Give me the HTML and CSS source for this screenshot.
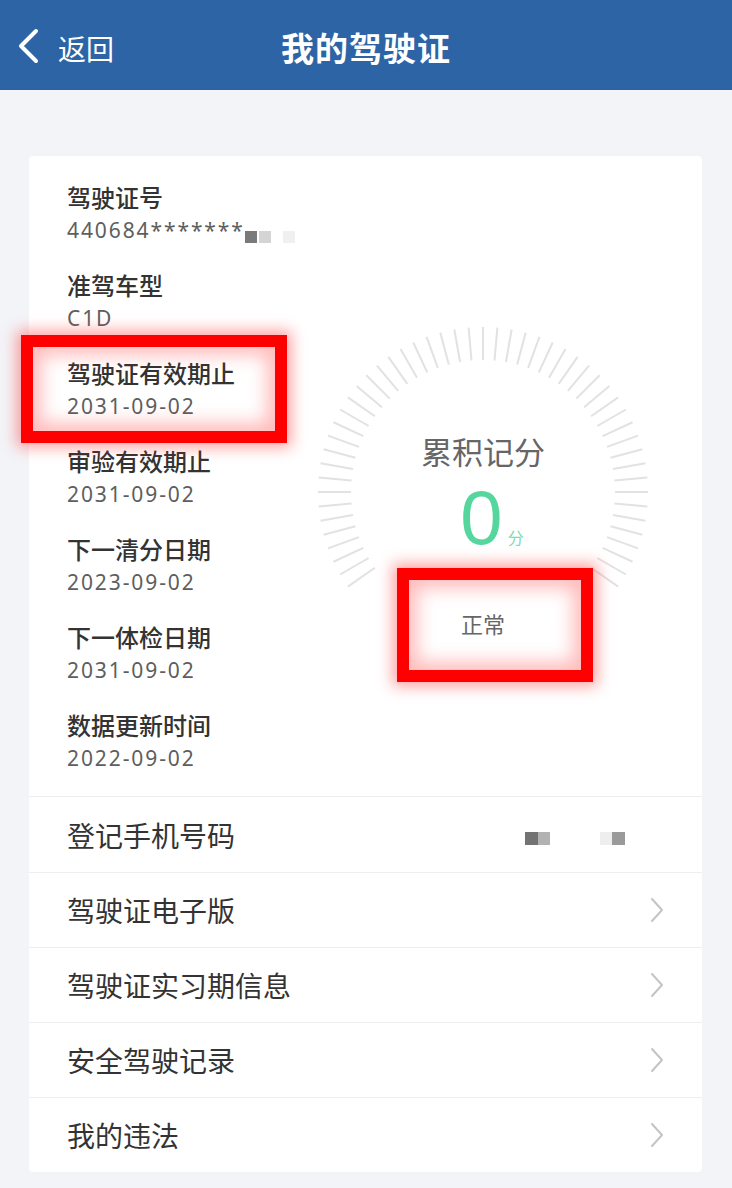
FILE: index.html
```html
<!DOCTYPE html>
<html lang="zh-CN">
<head>
<meta charset="utf-8">
<title>我的驾驶证</title>
<link rel="stylesheet" href="styles.css">
</head>
<body>
<header class="nav">
  <div class="back">
    <svg class="back-icon" viewBox="0 0 22 36" width="22" height="36"><path d="M19 3 L4 18 L19 33" fill="none" stroke="#fff" stroke-width="4" stroke-linecap="round" stroke-linejoin="round"/></svg>
    <span>返回</span>
  </div>
  <h1 class="title">我的驾驶证</h1>
  <div></div>
</header>
<main class="page">
  <section class="card">
    <div class="info">
      <dl class="fields">
        <div class="field"><dt>驾驶证号</dt><dd>440684*******<span class="mosaic"><i class="m1"></i><i class="m2"></i><i class="m3"></i></span></dd></div>
        <div class="field"><dt>准驾车型</dt><dd>C1D</dd></div>
        <div class="field"><dt>驾驶证有效期止</dt><dd>2031-09-02</dd></div>
        <div class="field"><dt>审验有效期止</dt><dd>2031-09-02</dd></div>
        <div class="field"><dt>下一清分日期</dt><dd>2023-09-02</dd></div>
        <div class="field"><dt>下一体检日期</dt><dd>2031-09-02</dd></div>
        <div class="field"><dt>数据更新时间</dt><dd>2022-09-02</dd></div>
      </dl>
      <div class="gauge">
        <svg class="ticks" viewBox="0 0 336 336" width="336" height="336">
          <defs><line id="t" x1="168" y1="3" x2="168" y2="36" stroke="#e2e2e2" stroke-width="2"/></defs>
          <use href="#t" transform="rotate(-125 168 168)"/><use href="#t" transform="rotate(-120 168 168)"/><use href="#t" transform="rotate(-115 168 168)"/><use href="#t" transform="rotate(-110 168 168)"/><use href="#t" transform="rotate(-105 168 168)"/><use href="#t" transform="rotate(-100 168 168)"/><use href="#t" transform="rotate(-95 168 168)"/><use href="#t" transform="rotate(-90 168 168)"/><use href="#t" transform="rotate(-85 168 168)"/><use href="#t" transform="rotate(-80 168 168)"/><use href="#t" transform="rotate(-75 168 168)"/><use href="#t" transform="rotate(-70 168 168)"/><use href="#t" transform="rotate(-65 168 168)"/><use href="#t" transform="rotate(-60 168 168)"/><use href="#t" transform="rotate(-55 168 168)"/><use href="#t" transform="rotate(-50 168 168)"/><use href="#t" transform="rotate(-45 168 168)"/><use href="#t" transform="rotate(-40 168 168)"/><use href="#t" transform="rotate(-35 168 168)"/><use href="#t" transform="rotate(-30 168 168)"/><use href="#t" transform="rotate(-25 168 168)"/><use href="#t" transform="rotate(-20 168 168)"/><use href="#t" transform="rotate(-15 168 168)"/><use href="#t" transform="rotate(-10 168 168)"/><use href="#t" transform="rotate(-5 168 168)"/><use href="#t"/><use href="#t" transform="rotate(5 168 168)"/><use href="#t" transform="rotate(10 168 168)"/><use href="#t" transform="rotate(15 168 168)"/><use href="#t" transform="rotate(20 168 168)"/><use href="#t" transform="rotate(25 168 168)"/><use href="#t" transform="rotate(30 168 168)"/><use href="#t" transform="rotate(35 168 168)"/><use href="#t" transform="rotate(40 168 168)"/><use href="#t" transform="rotate(45 168 168)"/><use href="#t" transform="rotate(50 168 168)"/><use href="#t" transform="rotate(55 168 168)"/><use href="#t" transform="rotate(60 168 168)"/><use href="#t" transform="rotate(65 168 168)"/><use href="#t" transform="rotate(70 168 168)"/><use href="#t" transform="rotate(75 168 168)"/><use href="#t" transform="rotate(80 168 168)"/><use href="#t" transform="rotate(85 168 168)"/><use href="#t" transform="rotate(90 168 168)"/><use href="#t" transform="rotate(95 168 168)"/><use href="#t" transform="rotate(100 168 168)"/><use href="#t" transform="rotate(105 168 168)"/><use href="#t" transform="rotate(110 168 168)"/><use href="#t" transform="rotate(115 168 168)"/><use href="#t" transform="rotate(120 168 168)"/><use href="#t" transform="rotate(125 168 168)"/>
        </svg>
        <div class="gauge-title">累积记分</div>
        <div class="score"><span class="num">0</span><span class="unit">分</span></div>
        <div class="status">正常</div>
      </div>
    </div>
    <ul class="menu">
      <li class="row"><span>登记手机号码</span><span class="mosaic phone"><i class="p1"></i><i class="p2"></i><i class="p3"></i><i class="p4"></i></span></li>
      <li class="row"><span>驾驶证电子版</span><svg class="chev" viewBox="0 0 16 26" width="16" height="26"><path d="M3 2 L13 13 L3 24" fill="none" stroke="#c4c4c4" stroke-width="2" stroke-linecap="round" stroke-linejoin="round"/></svg></li>
      <li class="row"><span>驾驶证实习期信息</span><svg class="chev" viewBox="0 0 16 26" width="16" height="26"><path d="M3 2 L13 13 L3 24" fill="none" stroke="#c4c4c4" stroke-width="2" stroke-linecap="round" stroke-linejoin="round"/></svg></li>
      <li class="row"><span>安全驾驶记录</span><svg class="chev" viewBox="0 0 16 26" width="16" height="26"><path d="M3 2 L13 13 L3 24" fill="none" stroke="#c4c4c4" stroke-width="2" stroke-linecap="round" stroke-linejoin="round"/></svg></li>
      <li class="row"><span>我的违法</span><svg class="chev" viewBox="0 0 16 26" width="16" height="26"><path d="M3 2 L13 13 L3 24" fill="none" stroke="#c4c4c4" stroke-width="2" stroke-linecap="round" stroke-linejoin="round"/></svg></li>
    </ul>
  </section>
  <div class="mark mark-1"></div>
  <div class="mark mark-2"></div>
</main>
</body>
</html>
```
FILE: styles.css
```css
* { box-sizing: border-box; }
html, body {
  margin: 0;
  padding: 0;
  background: #f3f4f8;
  font-family: "Noto Sans", "Noto Sans CJK SC", sans-serif;
  color: #333;
}
.nav {
  height: 90px;
  background: #2d64a6;
  color: #fff;
  display: grid;
  grid-template-columns: 1fr auto 1fr;
  align-items: center;
}
.back {
  display: flex;
  align-items: center;
  gap: 19px;
  padding-left: 17px;
  padding-top: 6px;
  font-size: 28px;
  font-family: "Noto Sans CJK SC", sans-serif;
}
.back-icon { display: block; margin-top: -4px; }
.title {
  margin: 0;
  padding-top: 4px;
  font-size: 33px;
  font-weight: 700;
  font-family: "Noto Sans CJK SC", sans-serif;
  letter-spacing: 1px;
}
.page {
  position: relative;
  padding: 66px 30px 20px 29px;
}
.card {
  background: #fff;
  border-radius: 4px;
}
.info {
  display: flex;
  padding: 24px 51px 22px 38px;
}
.fields {
  flex: 1;
  margin: 0;
  display: flex;
  flex-direction: column;
  gap: 22px;
}
.field dt {
  font-family: "Noto Sans CJK SC", sans-serif;
  font-size: 24px;
  line-height: 34px;
  font-weight: 500;
  color: #333;
}
.field dd {
  margin: 0;
  font-size: 21px;
  line-height: 32px;
  color: #5e5e5e;
  letter-spacing: 1.9px;
  display: flex;
  align-items: center;
}
.mosaic { display: flex; align-items: center; }
.mosaic i { display: block; width: 12px; height: 12px; }
.field .mosaic { margin-left: 0; margin-top: 14px; }
.m1 { background: #7a7a7a; }
.m2 { background: #d4d4d4; margin-left: 2px; }
.m3 { background: #f0f0f0; margin-left: 12px; }
.gauge {
  position: relative;
  width: 336px;
  height: 336px;
  margin-top: 144px;
  display: flex;
  flex-direction: column;
  align-items: center;
  padding-top: 107px;
}
.ticks {
  position: absolute;
  left: 0;
  top: 0;
}
.gauge-title {
  font-family: "Noto Sans CJK SC", sans-serif;
  font-size: 31px;
  line-height: 40px;
  color: #666;
}
.score {
  margin-top: 9px;
  height: 76px;
  display: flex;
  align-items: baseline;
  padding-left: 18px;
}
.num {
  font-family: "Liberation Sans", sans-serif;
  font-size: 76px;
  line-height: 76px;
  font-weight: 400;
  color: #55d69c;
}
.unit {
  font-family: "Noto Sans CJK SC", sans-serif;
  font-size: 16px;
  color: #7fdcb0;
  margin-left: 5px;
}
.status {
  margin-top: 52px;
  font-family: "Noto Sans CJK SC", sans-serif;
  font-size: 22px;
  line-height: 30px;
  color: #666;
}
.menu {
  list-style: none;
  margin: 0;
  padding: 0;
}
.row {
  height: 75px;
  border-top: 1px solid #eeeeee;
  display: flex;
  align-items: center;
  justify-content: space-between;
  padding: 0 37px 0 38px;
  font-family: "Noto Sans CJK SC", sans-serif;
  font-size: 28px;
  color: #333;
}
.row:first-child { height: 76px; }
.chev { display: block; }
.phone { margin-right: 40px; margin-top: 8px; }
.p1 { background: #737373; width: 13px !important; height: 13px !important; }
.p2 { background: #b2b2b2; width: 12px !important; height: 13px !important; }
.p3 { background: #eeeeee; margin-left: 50px; width: 12px !important; height: 13px !important; }
.p4 { background: #9a9a9a; width: 13px !important; height: 13px !important; }
.mark {
  position: absolute;
  border: 12px solid #ff0000;
  box-shadow: 0 0 14px 4px rgba(255, 40, 40, 0.45), inset 0 0 18px 8px rgba(255, 60, 60, 0.35);
}
.mark-1 { left: 21px; top: 245px; width: 266px; height: 108px; }
.mark-2 { left: 397px; top: 478px; width: 196px; height: 114px; }
```
